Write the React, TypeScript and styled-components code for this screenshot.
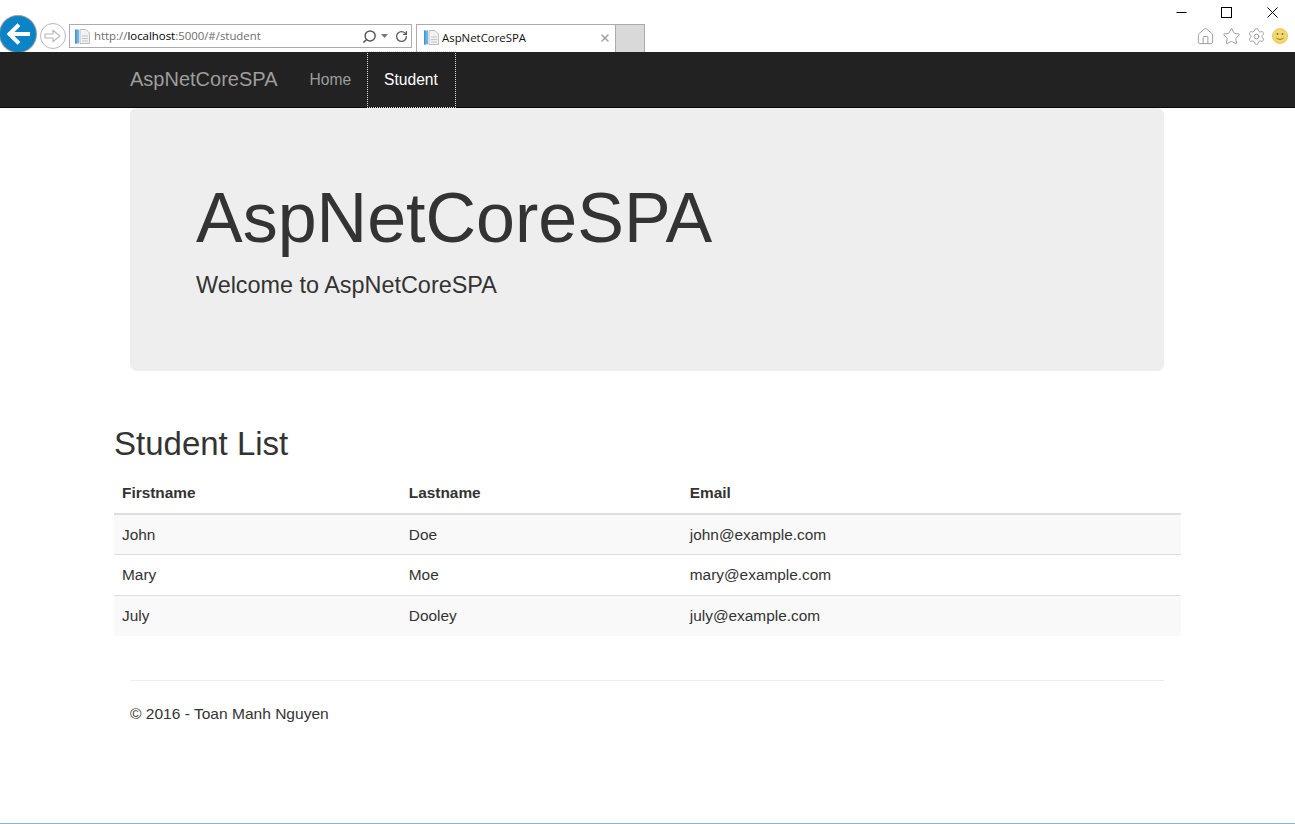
import React from "react";
import styled, { createGlobalStyle } from "styled-components";
import { Home as HomeIcon, Star, Settings, Search, RotateCw, X } from "lucide-react";

const Global = createGlobalStyle`
  * { box-sizing: border-box; }
  html, body { margin: 0; padding: 0; background: #fff; }
  body { font-family: "Liberation Sans", Arial, sans-serif; font-size: 15.4px; line-height: 22px; color: #333; overflow: hidden; }
`;

const Page = styled.div`
  height: 824px;
  border-bottom: 1px solid #86b4da;
  display: flex;
  flex-direction: column;
`;

/* Browser chrome */
const Chrome = styled.header`
  height: 52px;
  flex: none;
  display: flex;
  align-items: flex-end;
  overflow: hidden;
  background: #fff;
`;
const BackButton = styled.div`
  width: 36px;
  height: 36px;
  border-radius: 50%;
  background: #0a84c6;
  box-shadow: 0 0 0 1px #9a9a9a;
  display: flex;
  align-items: center;
  justify-content: center;
  flex: none;
`;
const ForwardButton = styled.div`
  width: 26px;
  height: 26px;
  margin: 0 3px 3px 4px;
  border-radius: 50%;
  border: 1px solid #b9b9b9;
  display: flex;
  align-items: center;
  justify-content: center;
  flex: none;
`;
const AddressBar = styled.div`
  width: 343px;
  height: 24px;
  margin-bottom: 4px;
  border: 1px solid #ababab;
  display: flex;
  align-items: center;
  padding: 0 3px 0 4px;
  flex: none;
`;
const AddressText = styled.span`
  font-family: "Open Sans", "Noto Sans", sans-serif;
  font-size: 11.4px;
  color: #6d6d6d;
  margin-left: 3px;
  flex: 1;
  white-space: nowrap;
  b { font-weight: 400; color: #000; }
`;
const AddressTools = styled.div`
  display: flex;
  align-items: center;
  color: #5a5a5a;
`;
const Dropdown = styled.svg`
  margin: 0 6px 0 3px;
`;
const Tab = styled.div`
  width: 200px;
  height: 28px;
  margin-left: 4px;
  border: 1px solid #ababab;
  border-bottom: none;
  display: flex;
  align-items: center;
  padding: 0 4px 2px 6px;
  flex: none;
`;
const TabTitle = styled.span`
  font-family: "Open Sans", "Noto Sans", sans-serif;
  font-size: 11.4px;
  color: #111;
  margin-left: 2px;
  flex: 1;
  white-space: nowrap;
`;
const NewTab = styled.div`
  width: 29px;
  height: 28px;
  background: #d9d9d9;
  border: 1px solid #ababab;
  border-left: none;
  border-bottom: none;
  flex: none;
`;
const ChromeRight = styled.div`
  margin-left: auto;
  align-self: stretch;
  display: flex;
  flex-direction: column;
  align-items: flex-end;
`;
const WindowButtons = styled.div`
  display: flex;
  height: 24px;
`;
const WindowButton = styled.div`
  width: 45.5px;
  display: flex;
  align-items: center;
  justify-content: center;
`;
const ToolIcons = styled.div`
  display: flex;
  align-items: center;
  height: 24px;
  gap: 6.2px;
  padding-right: 7px;
  color: #9a9a9a;
`;

/* Navbar */
const Navbar = styled.nav`
  height: 56px;
  flex: none;
  background: #222;
  border-bottom: 1px solid #080808;
`;
const NavInner = styled.div`
  width: 1067px;
  height: 55px;
  margin: 0 auto;
  padding-left: 16px;
  display: flex;
`;
const Brand = styled.a`
  font-size: 20px;
  line-height: 55px;
  color: #9d9d9d;
  padding-right: 15.5px;
`;
const NavLink = styled.a<{ $active?: boolean }>`
  display: block;
  height: 55px;
  line-height: 55px;
  padding: 0 ${(p) => (p.$active ? "17.5px" : "16.5px")} 0 16.5px;
  font-size: 15.6px;
  color: ${(p) => (p.$active ? "#fff" : "#9d9d9d")};
  ${(p) => p.$active && "outline: 1px dotted #ddd;"}
`;

/* Content */
const Container = styled.main`
  width: 1067px;
  margin: 0 auto;
`;
const Jumbotron = styled.section`
  margin: 0 17px 55px 16px;
  padding: 52.8px 66px;
  height: 263px;
  background: #eee;
  border-radius: 6.6px;
`;
const JumboTitle = styled.h1`
  font-size: 70px;
  line-height: 76.2px;
  font-weight: 400;
  margin: 19px 0 13px;
`;
const Lead = styled.p`
  font-size: 23.4px;
  line-height: 33px;
  margin: 0 0 16.5px;
`;
const SectionTitle = styled.h2`
  font-size: 33px;
  line-height: 36.3px;
  font-weight: 400;
  margin: 0 0 11px;
`;
const Table = styled.table`
  width: 1067px;
  table-layout: fixed;
  border-collapse: collapse;
  margin-bottom: 44px;
`;
const HeadCell = styled.th<{ $w: number }>`
  width: ${(p) => p.$w}px;
  padding: 8.8px;
  text-align: left;
  font-weight: 700;
  line-height: 22px;
  border-bottom: 2.2px solid #ddd;
  &:first-child { padding-left: 8px; }
`;
const Row = styled.tr`
  &:nth-child(odd) { background: #f9f9f9; }
  & + & td { border-top: 1.1px solid #ddd; }
`;
const Cell = styled.td`
  padding: 8.8px;
  line-height: 22px;
  &:first-child { padding-left: 8px; }
`;
const Footer = styled.footer`
  margin: 0 17px 0 16px;
`;
const Rule = styled.hr`
  margin: 0 0 22px;
  border: 0;
  border-top: 1.1px solid #eee;
`;
const FooterText = styled.p`
  margin: 0 0 11px;
  font-size: 15.55px;
`;

const PageIcon = () => (
  <svg width="17" height="17" viewBox="0 0 17 17" fill="none">
    <rect x="1" y="1.5" width="4" height="14" fill="#6fb3e3" />
    <rect x="1" y="1.5" width="1.5" height="14" fill="#3f96d6" />
    <path d="M6 1.5h6l3.5 3.5v10.5H6z" fill="#f2f2f2" stroke="#bdbdbd" strokeWidth="1" />
    <path d="M8 8h6M8 10.5h6M8 13h6" stroke="#c4c4c4" strokeWidth="1" />
  </svg>
);

const Smiley = () => (
  <svg width="16" height="16" viewBox="0 0 16 16">
    <circle cx="8" cy="8" r="7.6" fill="#f3d770" stroke="#e3c04e" strokeWidth="0.8" />
    <circle cx="5.5" cy="6" r="1" fill="#8a7420" />
    <circle cx="10.5" cy="6" r="1" fill="#8a7420" />
    <path d="M4.2 9.6c1 2.2 6.6 2.2 7.6 0" fill="none" stroke="#8a7420" strokeWidth="1" />
  </svg>
);

const rows = [
  ["John", "Doe", "john@example.com"],
  ["Mary", "Moe", "mary@example.com"],
  ["July", "Dooley", "july@example.com"],
];

export default function App() {
  return (
    <Page>
      <Global />
      <Chrome>
        <BackButton>
          <svg width="24" height="22" viewBox="0 0 24 22" fill="none">
            <path d="M22 11H4M11.5 3 3.5 11l8 8" stroke="#fff" strokeWidth="4" strokeLinecap="square" strokeLinejoin="miter" />
          </svg>
        </BackButton>
        <ForwardButton>
          <svg width="18" height="14" viewBox="0 0 18 14" fill="none">
            <path d="M1 5h8V1.5L16 7l-7 5.5V9H1z" stroke="#b5b5b5" strokeWidth="1.1" fill="#fff" />
          </svg>
        </ForwardButton>
        <AddressBar>
          <PageIcon />
          <AddressText>
            http://<b>localhost</b>:5000/#/student
          </AddressText>
          <AddressTools>
            <Search size={15} strokeWidth={2.4} style={{ transform: "scaleX(-1)" }} />
            <Dropdown width="9" height="6" viewBox="0 0 9 6"><path d="M1 1h7L4.5 5z" fill="#777" /></Dropdown>
            <RotateCw size={13} strokeWidth={2.4} />
          </AddressTools>
        </AddressBar>
        <Tab>
          <PageIcon />
          <TabTitle>AspNetCoreSPA</TabTitle>
          <X size={12} strokeWidth={3} color="#a0a0a0" />
        </Tab>
        <NewTab />
        <ChromeRight>
          <WindowButtons>
            <WindowButton>
              <svg width="11" height="11" viewBox="0 0 11 11"><path d="M0.5 5.5h10" stroke="#000" strokeWidth="1" /></svg>
            </WindowButton>
            <WindowButton>
              <svg width="11" height="11" viewBox="0 0 11 11"><rect x="0.5" y="0.5" width="10" height="10" fill="none" stroke="#000" strokeWidth="1" /></svg>
            </WindowButton>
            <WindowButton>
              <svg width="11" height="11" viewBox="0 0 11 11"><path d="M0.5 0.5l10 10M10.5 0.5l-10 10" stroke="#000" strokeWidth="1" /></svg>
            </WindowButton>
          </WindowButtons>
          <ToolIcons>
            <HomeIcon size={19} strokeWidth={1.2} />
            <Star size={19} strokeWidth={1.2} />
            <Settings size={19} strokeWidth={1.2} />
            <Smiley />
          </ToolIcons>
        </ChromeRight>
      </Chrome>

      <Navbar>
        <NavInner>
          <Brand>AspNetCoreSPA</Brand>
          <NavLink>Home</NavLink>
          <NavLink $active>Student</NavLink>
        </NavInner>
      </Navbar>

      <Container>
        <Jumbotron>
          <JumboTitle>AspNetCoreSPA</JumboTitle>
          <Lead>Welcome to AspNetCoreSPA</Lead>
        </Jumbotron>
        <SectionTitle>Student List</SectionTitle>
        <Table>
          <thead>
            <tr>
              <HeadCell $w={286}>Firstname</HeadCell>
              <HeadCell $w={281}>Lastname</HeadCell>
              <HeadCell $w={500}>Email</HeadCell>
            </tr>
          </thead>
          <tbody>
            {rows.map((r) => (
              <Row key={r[0]}>
                {r.map((c) => (
                  <Cell key={c}>{c}</Cell>
                ))}
              </Row>
            ))}
          </tbody>
        </Table>
        <Footer>
          <Rule />
          <FooterText>© 2016 - Toan Manh Nguyen</FooterText>
        </Footer>
      </Container>
    </Page>
  );
}
